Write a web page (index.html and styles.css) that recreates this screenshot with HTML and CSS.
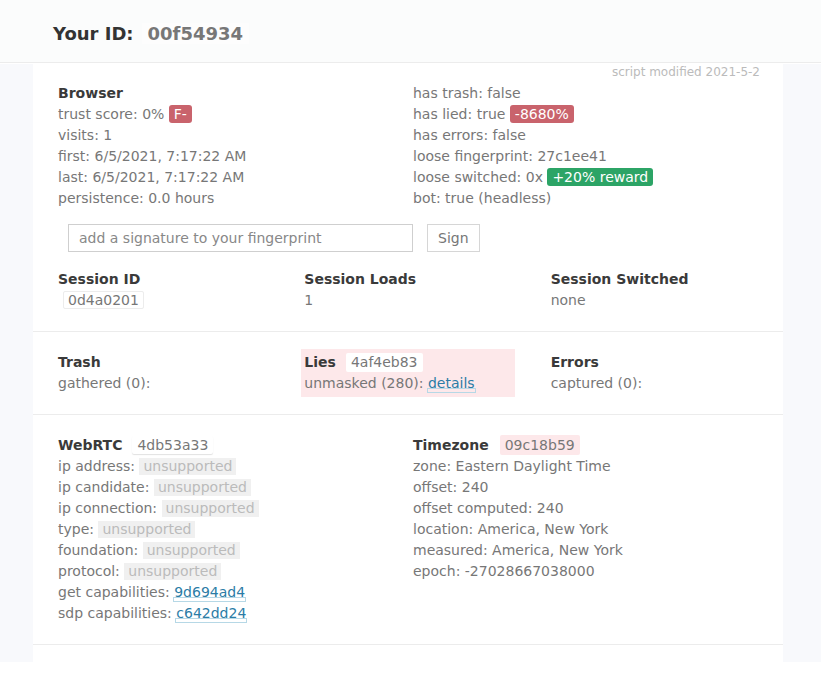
FILE: index.html
```html
<!DOCTYPE html>
<html>
<head>
<meta charset="utf-8">
<link rel="stylesheet" href="styles.css">
</head>
<body>
<header class="top">
  <span class="your-id">Your ID:</span><span class="fp-id">00f54934</span>
</header>
<div class="wrap">
  <main class="container">
    <section class="section first">
      <div class="modified">script modified 2021-5-2</div>
      <div class="grid2">
        <div class="cell">
          <div class="title">Browser</div>
          <div>trust score: 0% <span class="badge red">F-</span></div>
          <div>visits: 1</div>
          <div>first: 6/5/2021, 7:17:22 AM</div>
          <div>last: 6/5/2021, 7:17:22 AM</div>
          <div>persistence: 0.0 hours</div>
        </div>
        <div class="cell">
          <div>has trash: false</div>
          <div>has lied: true <span class="badge red">-8680%</span></div>
          <div>has errors: false</div>
          <div>loose fingerprint: 27c1ee41</div>
          <div>loose switched: 0x <span class="badge green">+20% reward</span></div>
          <div>bot: true (headless)</div>
        </div>
      </div>
      <div class="sign-row">
        <input class="sign-input" type="text" placeholder="add a signature to your fingerprint">
        <button class="sign-btn">Sign</button>
      </div>
      <div class="grid3 session">
        <div class="cell">
          <div class="title">Session ID</div>
          <div><span class="hash bordered">0d4a0201</span></div>
        </div>
        <div class="cell">
          <div class="title">Session Loads</div>
          <div>1</div>
        </div>
        <div class="cell">
          <div class="title">Session Switched</div>
          <div>none</div>
        </div>
      </div>
    </section>
    <section class="section">
      <div class="grid3">
        <div class="cell">
          <div class="title">Trash</div>
          <div>gathered (0):</div>
        </div>
        <div class="cell lies">
          <div><span class="title">Lies</span><span class="hash white">4af4eb83</span></div>
          <div>unmasked (280): <span class="link">details</span></div>
        </div>
        <div class="cell">
          <div class="title">Errors</div>
          <div>captured (0):</div>
        </div>
      </div>
    </section>
    <section class="section">
      <div class="grid2">
        <div class="cell">
          <div><span class="title">WebRTC</span><span class="hash shadow">4db53a33</span></div>
          <div>ip address: <span class="unsup">unsupported</span></div>
          <div>ip candidate: <span class="unsup">unsupported</span></div>
          <div>ip connection: <span class="unsup">unsupported</span></div>
          <div>type: <span class="unsup">unsupported</span></div>
          <div>foundation: <span class="unsup">unsupported</span></div>
          <div>protocol: <span class="unsup">unsupported</span></div>
          <div>get capabilities: <span class="link">9d694ad4</span></div>
          <div>sdp capabilities: <span class="link">c642dd24</span></div>
        </div>
        <div class="cell">
          <div><span class="title">Timezone</span><span class="hash pink">09c18b59</span></div>
          <div>zone: Eastern Daylight Time</div>
          <div>offset: 240</div>
          <div>offset computed: 240</div>
          <div>location: America, New York</div>
          <div>measured: America, New York</div>
          <div>epoch: -27028667038000</div>
        </div>
      </div>
    </section>
    <section class="section tail"></section>
  </main>
</div>
</body>
</html>
```

FILE: styles.css
```css
html {
  background: #ffffff;
}
body {
  margin: 0;
  font-family: "DejaVu Sans", Verdana, sans-serif;
  font-size: 14px;
  line-height: 21px;
  color: #777777;
}
.top {
  box-sizing: border-box;
  height: 63px;
  padding: 4px 0 0 53px;
  display: flex;
  align-items: center;
  background: #fbfcfc;
  border-bottom: 1px solid #ececec;
  font-size: 18px;
  font-weight: bold;
}
.your-id {
  color: #333333;
}
.fp-id {
  margin-left: 8px;
  padding: 0 6px;
  color: #777777;
  background: #fdfdfd;
}
.wrap {
  background: #f8f9fc;
}
.container {
  width: 750px;
  margin-left: 33px;
  background: #ffffff;
}
.section {
  padding: 17px 22px;
  border-bottom: 1px solid #ececec;
}
.section.first {
  padding-top: 0;
}
.section.tail {
  border-bottom: none;
  padding: 0;
  height: 17px;
}
.modified {
  margin-top: 1px;
  font-size: 12px;
  line-height: 16px;
  text-align: right;
  color: #bbbbbb;
  padding-right: 1px;
}
.grid2 {
  display: grid;
  grid-template-columns: 1fr 1fr;
  column-gap: 4px;
}
.grid3 {
  display: grid;
  grid-template-columns: repeat(3, 1fr);
  column-gap: 33px;
}
.cell {
  padding: 3px;
}
.title {
  font-weight: bold;
  color: #3a3a3a;
}
.badge {
  display: inline-block;
  line-height: 18px;
  padding: 0 5px;
  border-radius: 3px;
  color: #ffffff;
}
.red {
  background: #c9636c;
}
.green {
  background: #2ca466;
}
.sign-row {
  margin-top: 12px;
  padding-left: 13px;
  display: flex;
  gap: 14px;
}
.sign-input {
  box-sizing: border-box;
  width: 345px;
  height: 28px;
  padding: 0 10px;
  border: 1px solid #cfcfcf;
  border-radius: 0;
  font-family: "DejaVu Sans", Verdana, sans-serif;
  font-size: 14px;
  color: #555555;
  background: #ffffff;
  outline: none;
}
.sign-input::placeholder {
  color: #888888;
}
.sign-btn {
  box-sizing: border-box;
  height: 28px;
  padding: 0 10px;
  border: 1px solid #d6d6d6;
  border-radius: 0;
  background: #ffffff;
  font-family: "DejaVu Sans", Verdana, sans-serif;
  font-size: 14px;
  color: #777777;
}
.session {
  margin-top: 14px;
}
.hash {
  display: inline-block;
  line-height: 18px;
  padding: 0 5px;
  border-radius: 2px;
  color: #777777;
}
.hash.bordered {
  margin-left: 5px;
  padding: 0 4px;
  border: 1px solid #ececec;
  line-height: 16px;
}
.hash.white {
  margin-left: 10px;
  background: #ffffff;
  line-height: 19px;
}
.hash.shadow {
  margin-left: 10px;
  background: #ffffff;
  box-shadow: 0 1px 1px rgba(0, 0, 0, 0.12);
}
.hash.pink {
  margin-left: 11px;
  background: #fde8ea;
  line-height: 20px;
}
.lies {
  background: #fde8ea;
}
.unsup {
  display: inline-block;
  line-height: 17px;
  padding: 0 4px;
  background: #f0f0f0;
  color: #bbbbbb;
}
.link {
  position: relative;
  color: #2b7ca6;
}
.link::after {
  content: "";
  position: absolute;
  left: -1px;
  right: -1px;
  bottom: -2px;
  height: 5px;
  box-sizing: border-box;
  border: 1px solid #b6d8e6;
}
```
